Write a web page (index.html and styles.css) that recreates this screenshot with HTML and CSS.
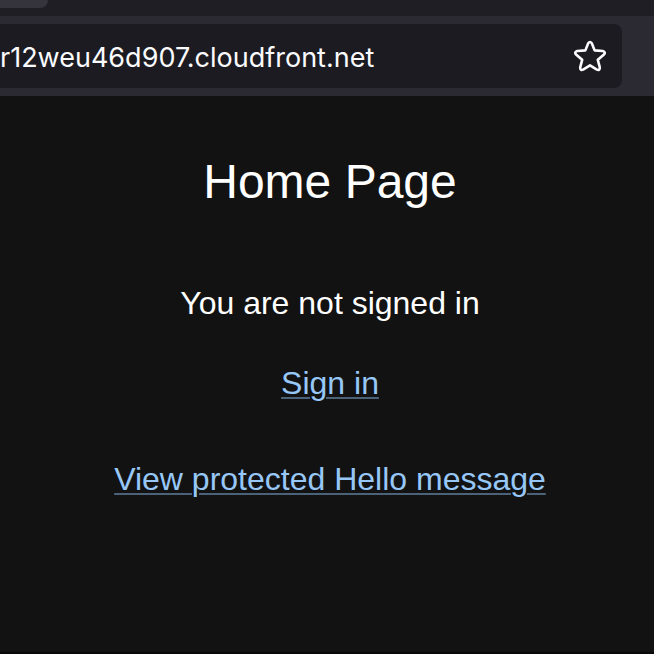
FILE: index.html
```html
<!DOCTYPE html>
<html lang="en">
<head>
<meta charset="utf-8">
<title>Home Page</title>
<link rel="stylesheet" href="styles.css">
</head>
<body>
<div class="window">
  <header>
    <div class="tabs"><div class="tab"></div></div>
    <div class="toolbar">
      <div class="address">
        <input class="url" type="text" aria-label="Address" value="r12weu46d907.cloudfront.net">
        <button class="bookmark" type="button" aria-label="Bookmark this page">
          <svg viewBox="0 0 32 32" width="32" height="32" fill="none" stroke="currentColor" stroke-width="2.6" stroke-linejoin="round">
            <path d="M14.2 3.2Q16 .8 17.8 3.2L20.6 10.4L28.8 11Q32 12 30 14.4L23.8 19.8L25.8 27.4Q25.8 30.8 22.9 29.6L16 25.4L9.1 29.6Q6.2 30.8 6.2 27.4L8.2 19.8L2 14.4Q0 12 3.2 11L11.4 10.4Z"/>
          </svg>
        </button>
      </div>
    </div>
  </header>
  <main>
    <h1>Home Page</h1>
    <p class="status">You are not signed in</p>
    <p class="sign-in"><a href="#signin">Sign in</a></p>
    <p><a href="#hello">View protected Hello message</a></p>
  </main>
</div>
</body>
</html>
```
FILE: styles.css
```css
* {
  box-sizing: border-box;
}

body {
  margin: 0;
  background: #121212;
  color: #fff;
  font-family: "Liberation Sans", Helvetica, Arial, sans-serif;
}

.window {
  display: flex;
  flex-direction: column;
  min-height: 100vh;
  border-bottom: 2px solid #0b080c;
}

.tabs {
  height: 16px;
  background: #1f1e25;
}

.tab {
  width: 48px;
  height: 8px;
  border-radius: 0 0 8px 0;
  background: #35343d;
}

.toolbar {
  padding: 8px 32px 8px 0;
  background: #2b2a33;
}

.address {
  display: flex;
  align-items: center;
  height: 64px;
  padding-right: 16px;
  border-radius: 0 8px 8px 0;
  background: #1c1b22;
}

.url {
  flex: 1;
  min-width: 0;
  height: 64px;
  padding: 2px 0 0;
  border: 0;
  outline: 0;
  background: transparent;
  color: #fbfbfe;
  font: 400 27px Inter, sans-serif;
}

.bookmark {
  display: flex;
  padding: 0;
  border: 0;
  background: transparent;
  color: #fbfbfe;
}

main {
  padding: 48px 0 48px 6px;
  text-align: center;
}

h1,
p {
  margin: 0;
  font-weight: 400;
}

h1 {
  font-size: 48px;
  line-height: 76px;
}

p {
  font-size: 32px;
  line-height: 48px;
}

.status {
  margin: 59px 0 32px;
}

.sign-in {
  margin-bottom: 48px;
}

a {
  color: #97c7f7;
  text-decoration: underline 2px #4b6278;
  text-underline-offset: 3px;
}
```
